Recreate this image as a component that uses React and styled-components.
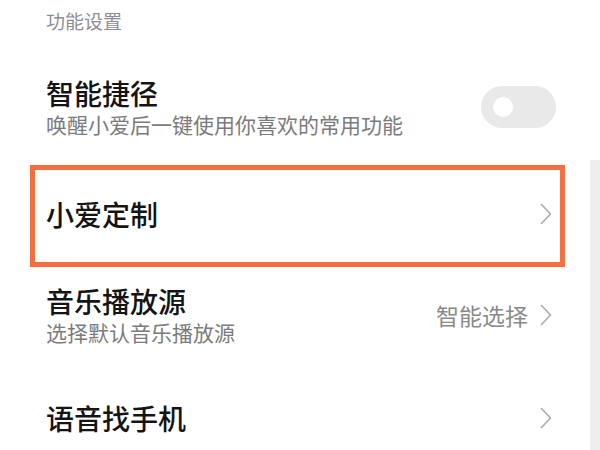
import React from "react";
import styled, { createGlobalStyle } from "styled-components";

const Global = createGlobalStyle`
  html, body { margin: 0; padding: 0; background: #ffffff; }
  body { font-family: "Noto Sans CJK SC", "Noto Sans", sans-serif; }
`;

const Page = styled.div`
  position: relative;
  width: 600px;
  height: 450px;
  overflow: hidden;
  background: #ffffff;
`;

const List = styled.div`
  display: flex;
  flex-direction: column;
  width: 525px;
  padding-left: 35px;
`;

const Header = styled.div`
  height: 44px;
  box-sizing: border-box;
  padding: 8px 0 0 11px;
  font-size: 19px;
  line-height: 26px;
  color: #8d8d99;
`;

const Row = styled.div`
  display: flex;
  align-items: center;
  justify-content: space-between;
  box-sizing: border-box;
  height: ${(p) => p.$h}px;
  padding: 0 8px ${(p) => p.$pb || 0}px 11px;
  outline: ${(p) => (p.$highlight ? "5px solid #f66d40" : "none")};
`;

const TextCol = styled.div`
  display: flex;
  flex-direction: column;
`;

const Title = styled.div`
  font-size: 28px;
  line-height: 34px;
  font-weight: 500;
  color: #141414;
`;

const Sub = styled.div`
  font-size: 21px;
  line-height: 28px;
  color: #7b7b7b;
`;

const Right = styled.div`
  display: flex;
  align-items: center;
  gap: 12px;
`;

const Value = styled.span`
  font-size: 23px;
  line-height: 30px;
  color: #8a8a8a;
`;

const Toggle = styled.div`
  width: 75px;
  height: 42px;
  border-radius: 21px;
  background: #e9e9e9;
  display: flex;
  align-items: center;
  padding-left: 12px;
  box-sizing: border-box;
  margin-right: -4px;
`;

const Knob = styled.div`
  width: 20px;
  height: 20px;
  border-radius: 50%;
  background: #ffffff;
`;

const ScrollTrack = styled.div`
  position: absolute;
  right: 0;
  top: 160px;
  bottom: 0;
  width: 10px;
  background: #eeeeee;
`;

const Chevron = () => (
  <svg width="12" height="22" viewBox="0 0 12 22" fill="none">
    <polyline
      points="1.5,1.5 10.5,11 1.5,20.5"
      stroke="#ababab"
      strokeWidth="1.6"
      strokeLinecap="round"
      strokeLinejoin="round"
    />
  </svg>
);

export default function App() {
  return (
    <>
      <Global />
      <Page>
        <List>
          <Header>功能设置</Header>
          <Row $h={126}>
            <TextCol>
              <Title>智能捷径</Title>
              <Sub>唤醒小爱后一键使用你喜欢的常用功能</Sub>
            </TextCol>
            <Toggle>
              <Knob />
            </Toggle>
          </Row>
          <Row $h={92} $pb={5} $highlight>
            <TextCol>
              <Title>小爱定制</Title>
            </TextCol>
            <Chevron />
          </Row>
          <Row $h={108} $pb={2}>
            <TextCol>
              <Title>音乐播放源</Title>
              <Sub>选择默认音乐播放源</Sub>
            </TextCol>
            <Right>
              <Value>智能选择</Value>
              <Chevron />
            </Right>
          </Row>
          <Row $h={96}>
            <TextCol>
              <Title>语音找手机</Title>
            </TextCol>
            <Chevron />
          </Row>
        </List>
        <ScrollTrack />
      </Page>
    </>
  );
}
